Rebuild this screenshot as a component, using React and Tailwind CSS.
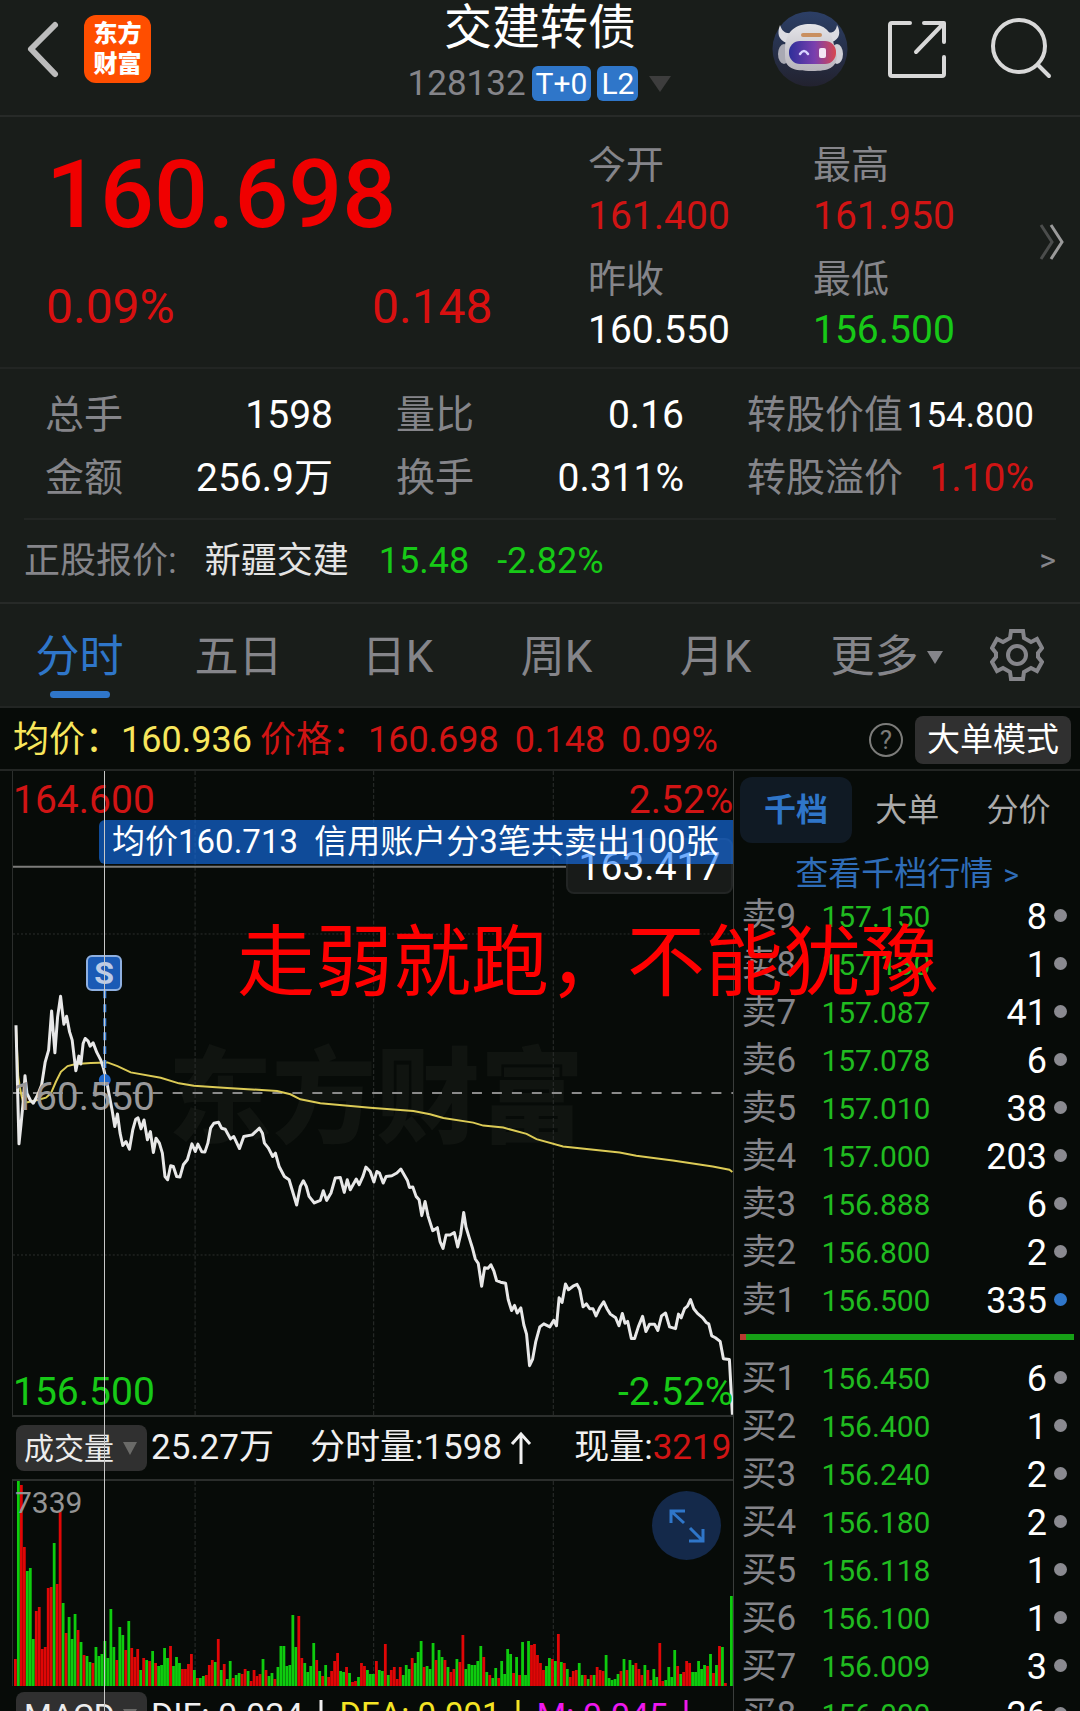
import React from "react";

const sells = [
  ["卖9", "157.150", "8"],
  ["卖8", "157.130", "1"],
  ["卖7", "157.087", "41"],
  ["卖6", "157.078", "6"],
  ["卖5", "157.010", "38"],
  ["卖4", "157.000", "203"],
  ["卖3", "156.888", "6"],
  ["卖2", "156.800", "2"],
  ["卖1", "156.500", "335", true],
];
const buys = [
  ["买1", "156.450", "6"],
  ["买2", "156.400", "1"],
  ["买3", "156.240", "2"],
  ["买4", "156.180", "2"],
  ["买5", "156.118", "1"],
  ["买6", "156.100", "1"],
  ["买7", "156.009", "3"],
  ["买8", "156.000", "26"],
];

// Minute trace, in thirds of a chart unit.
const priceOpen =
  "45,795 50,1000 54,1152 60,1095 68,1010 72,947 78,1000 88,1020 97,1030 110,1005 122,975 133,905 143,870 152,752 162,878 170,770 179,708 184,750 189,792 197,768 206,815 214,840 220,890 225,932 234,888 240,912 247,850 253,835 262,843 268,858 277,848 288,877 300,900 308,925 318,965 326,1010 334,1050 342,1100 350,1062 358,1120 366,1157 376,1145 386,1168 396,1110 405,1078 412,1074 421,1107 430,1080 440,1140 449,1115 458,1178 466,1135 476,1150 485,1180 493,1250 501,1260 510,1218 518,1220 528,1250 538,1252 548,1215 560,1200 574,1152 584,1175 592,1153 604,1176 613,1177 622,1150 630,1105 640,1090 654,1087 663,1105 674,1108 690,1137 700,1130 717,1166 730,1130 755,1125 777,1105 786,1120 792,1150 804,1165 817,1190 825,1180 836,1220 852,1250 866,1260 878,1300 889,1336 900,1280 909,1263 918,1280 926,1310 942,1330 960,1322 969,1293 979,1322 992,1300 1005,1255 1020,1253 1032,1298 1041,1260 1050,1290 1068,1258 1077,1275 1088,1250 1097,1222 1110,1235 1121,1267 1130,1235 1138,1240 1149,1270 1158,1250 1175,1248 1190,1240 1202,1228 1215,1250 1222,1262 1228,1283 1238,1282 1248,1310 1257,1320 1265,1368";
const priceClose =
  "185,208 195,170 204,210 218,250 232,242 240,280 249,299 258,262 270,262 283,255 293,295 302,260 311,200 318,240 328,270 338,300 346,328 355,340 365,403 374,352 384,354 393,344 402,362 410,388 422,392 437,395 445,440 455,470 464,456 472,477 483,463 492,510 500,535 509,622 518,605 528,555 540,515 552,507 570,515 582,497 590,512 598,435 607,448 617,397 626,413 640,403 652,398 660,412 670,460 680,452 690,465 700,465 709,485 720,463 732,446 742,465 752,480 768,490 778,512 788,478 796,505 804,500 815,547 825,547 836,515 849,486 859,528 870,508 885,508 895,525 906,485 918,477 930,515 948,520 957,480 965,490 975,465 984,458 993,440 1003,465 1014,478 1030,490 1040,503 1048,507 1057,540 1068,545 1082,555 1092,603 1110,605 1114,670 1119,757";
const average =
  "45,800 52,950 60,1000 66,1025 80,1027 110,1020 135,1013 150,1000 165,965 180,935 200,918 225,912 270,909 320,907 350,918 390,937 480,953 535,970 580,977 680,984 830,993 870,1003 900,1018 960,1030 1110,1043 1240,1053 1290,1063 1330,1074 1420,1088 1450,1097 1510,1103 1580,1122 1610,1138 1690,1160 1860,1178 1910,1188 2020,1202 2140,1220 2190,1230 2199,1237";

const place = (text, dx, dy, kx, ky) =>
  text.split(" ").map((p) => {
    const [x, y] = p.split(",").map(Number);
    return `${(x * kx + dx).toFixed(1)},${(y * ky + dy).toFixed(1)}`;
  });
const pricePoints = [
  ...place(priceOpen, -12, -10, 1 / 3, 1 / 3),
  ...place(priceClose, 348, 370, 1 / 3, 0.3642),
].join(" ");
const averagePoints = place(average, -12, -10, 1 / 3, 1 / 3).join(" ");

// One entry a minute: direction and height.
const volume =
  "r27 g205 r201 r139 g115 g118 g47 r75 r79 r37 r39 r98 r99 g143 r102 r174 g83 r53 g69 g47 g72 r56 g44 r31 g30 g24 r23 g39 g30 g32 g45 g28 g77 g39 r26 g59 g51 r36 g65 r38 r29 r37 g16 r28 g26 r25 g35 r23 g20 g21 g38 g28 r40 g20 g29 g23 r17 r17 r22 r32 g16 r8 g8 g10 r11 r21 r26 g24 r47 g16 r22 g7 g25 r8 g11 g13 r12 r17 g15 r5 r16 r10 r12 g27 r16 g10 g13 r7 g19 g40 g40 g20 g21 g71 g39 r70 r28 g23 g14 g20 g43 r26 g15 r10 g21 r9 r15 r25 r33 g15 g14 r19 g13 r4 r5 g9 r23 r20 g16 g12 g12 r25 g16 g15 r42 g11 r16 r19 r7 r19 g11 g21 g17 r28 g23 g34 g45 r19 g20 g17 g43 r26 g36 g29 r26 g19 r14 r17 g27 r24 r51 g17 g22 g21 g21 g25 g40 r29 g14 r11 g8 g18 r8 g25 g12 g37 g32 r13 g29 r11 g44 g11 g45 r41 r42 r31 r23 r16 g20 g28 r27 g25 r52 g24 r23 g17 r9 r15 r16 g23 g11 r11 g7 r11 g11 r19 r16 r15 g31 g8 g6 g7 g12 r15 g27 r16 g26 g21 r23 r17 r11 g21 r16 r6 g17 g9 r43 r5 g6 g19 g9 g36 r20 g12 r14 r25 r23 g14 g14 g25 g17 g21 r20 g32 r13 g21 r40 g39 r3 g0 g90".split(
    " "
  );

function Header() {
  return (
    <header className="grid h-[117px] grid-cols-[1fr_auto_1fr] border-b-2 border-[#272a28]">
      <div className="flex items-start gap-6 pl-[26px] pt-[15px]">
        <button aria-label="返回" className="h-[68px]">
          <svg width="34" height="60" viewBox="0 0 34 60" fill="none" stroke="#bcbcbc" strokeWidth="6" strokeLinecap="round" strokeLinejoin="round">
            <path d="M29 6 L5 30 L29 55" />
          </svg>
        </button>
        <button className="flex h-[68px] w-[67px] flex-col items-center justify-center rounded-xl bg-[#ff4e00] text-2xl font-black leading-[30px] text-white">
          <span>东方</span>
          <span>财富</span>
        </button>
      </div>
      <div className="flex flex-col items-center">
        <h1 className="text-5xl leading-[56px] text-white">交建转债</h1>
        <div className="mt-2.5 flex h-[35px] items-center gap-1.5">
          <span className="text-[35px] leading-9 text-[#85858a]">128132</span>
          <span className="flex h-[35px] items-center rounded-md bg-[#2f76c9] px-1 text-[30px] leading-9 text-white">T+0</span>
          <span className="flex h-[35px] items-center rounded-md bg-[#2f76c9] px-1 text-[30px] leading-9 text-white">L2</span>
          <svg className="ml-1" width="24" height="16" viewBox="0 0 24 16" fill="#3d3d3d">
            <path d="M1 0H23L12 16Z" />
          </svg>
        </div>
      </div>
      <div className="flex items-start justify-end pr-[25px] pt-[11px]">
        <button aria-label="智能助手" className="mr-[38px]">
          <svg width="76" height="76" viewBox="0 0 76 76">
            <defs>
              <linearGradient id="sky" x1="0" y1="0" x2="0" y2="1">
                <stop offset="0" stopColor="#2c3f66" />
                <stop offset="1" stopColor="#22222f" />
              </linearGradient>
              <linearGradient id="visor" x1="0" y1="0" x2="1" y2="0">
                <stop offset="0" stopColor="#2e2f9a" />
                <stop offset="0.55" stopColor="#7a3fae" />
                <stop offset="1" stopColor="#d8474f" />
              </linearGradient>
              <linearGradient id="shell" x1="0" y1="0" x2="0" y2="1">
                <stop offset="0" stopColor="#e4e4e8" />
                <stop offset="1" stopColor="#b6b3bb" />
              </linearGradient>
            </defs>
            <circle cx="38" cy="38" r="37.5" fill="url(#sky)" />
            <path d="M8 14 C5 22 6 29 15 32 L20 22 C13 23 10 20 8 14Z M65 14 C69 21 68 28 60 31 L54 21 C61 23 64 20 65 14Z" fill="#dcdce2" />
            <ellipse cx="12" cy="43" rx="6" ry="10" fill="#a9a9b3" />
            <ellipse cx="65" cy="43" rx="6" ry="10" fill="#cfcfd6" />
            <path d="M13 36 C14 20 24 13 38 13 C53 13 60 21 62 34 L65 45 C64 57 57 60 40 60 C21 60 13 57 13 45Z" fill="url(#shell)" />
            <rect x="29" y="22" width="21" height="4" rx="2" fill="#c98f60" />
            <rect x="17" y="30" width="47" height="23" rx="11" fill="url(#visor)" />
            <path d="M28 43 q4 -6 8 0" fill="none" stroke="#d9d4ff" strokeWidth="2.5" strokeLinecap="round" />
            <rect x="47" y="37" width="7" height="10" rx="2" fill="#f3e5f5" />
          </svg>
        </button>
        <button aria-label="分享" className="mr-[43px] mt-2">
          <svg width="62" height="62" viewBox="0 0 62 62" fill="none" stroke="#d8d8d8" strokeWidth="4" strokeLinecap="round" strokeLinejoin="round">
            <path d="M24 4H6Q4 4 4 6V55Q4 57 6 57H56Q58 57 58 55V38M38 4H58V23M57 5L30 33" />
          </svg>
        </button>
        <button aria-label="搜索" className="mt-1.5">
          <svg width="64" height="64" viewBox="0 0 64 64" fill="none" stroke="#d8d8d8" strokeWidth="4" strokeLinecap="round">
            <circle cx="28" cy="29" r="26" />
            <path d="M47 48L58 59" />
          </svg>
        </button>
      </div>
    </header>
  );
}

function Quote({ label, value, tone }) {
  return (
    <div>
      <dt className="text-[38px] leading-[56px] text-[#85858a]">{label}</dt>
      <dd className={"text-[39px] leading-[46px] " + tone}>{value}</dd>
    </div>
  );
}

function Summary() {
  return (
    <section className="flex h-[252px] border-b-2 border-[#222523]">
      <div className="w-[540px] pl-[46px]">
        <div className="pt-[26px] text-[95px] font-medium leading-[104px] text-[#f00000]">160.698</div>
        <div className="flex pt-[30px] text-[48px] leading-[60px] text-[#d81010]">
          <span className="w-[326px]">0.09%</span>
          <span>0.148</span>
        </div>
      </div>
      <dl className="grid flex-1 grid-cols-2 content-start gap-x-0 gap-y-3 pl-12 pt-5">
        <Quote label="今开" value="161.400" tone="text-[#d01414]" />
        <Quote label="最高" value="161.950" tone="text-[#d01414]" />
        <Quote label="昨收" value="160.550" tone="text-white" />
        <Quote label="最低" value="156.500" tone="text-[#17c917]" />
      </dl>
      <button aria-label="展开" className="pr-4">
        <svg width="26" height="40" viewBox="0 0 26 40" fill="none" strokeWidth="3">
          <path d="M3 3L14 20L3 37" stroke="#4b4d4c" />
          <path d="M13 3L24 20L13 37" stroke="#9a9a9a" />
        </svg>
      </button>
    </section>
  );
}

function Stat({ label, value, tone }) {
  return (
    <div className="flex items-center justify-between whitespace-nowrap">
      <dt className="text-[#85858a]">{label}</dt>
      <dd className={tone}>{value}</dd>
    </div>
  );
}

function Stats() {
  return (
    <dl className="mx-6 grid h-[151px] grid-cols-[288px_288px_287px] content-start justify-between border-b-2 border-[#222523] pl-[21px] pr-[22px] pt-[15px] text-[39px] leading-[63px]">
      <Stat label="总手" value="1598" tone="text-white" />
      <Stat label="量比" value="0.16" tone="text-white" />
      <Stat label="转股价值" value="154.800" tone="text-[35px] text-white" />
      <Stat label="金额" value="256.9万" tone="text-white" />
      <Stat label="换手" value="0.311%" tone="text-white" />
      <Stat label="转股溢价" value="1.10%" tone="text-[#d01414]" />
    </dl>
  );
}

function Underlying() {
  return (
    <a href="#stock" className="flex h-[84px] items-center border-b-2 border-[#272a28] px-6 text-4xl text-[#85858a]">
      <span>正股报价:</span>
      <span className="ml-7 text-[#e4e4e4]">新疆交建</span>
      <span className="ml-[30px] text-[#17c917]">15.48</span>
      <span className="ml-7 text-[#17c917]">-2.82%</span>
      <span className="ml-auto text-[32px]">&gt;</span>
    </a>
  );
}

function Periods() {
  const tab = "flex h-full items-center justify-center pt-1";
  return (
    <nav className="grid h-[104px] grid-cols-[repeat(6,159fr)_126fr] items-center border-b-2 border-[#222523] text-[44px] text-[#85858a]">
      <button className={tab + " relative text-[#2f76c9]"}>
        分时
        <span className="absolute bottom-2 left-1/2 h-[7px] w-[60px] -translate-x-1/2 rounded-full bg-[#2f76c9]" />
      </button>
      <button className={tab}>五日</button>
      <button className={tab}>日K</button>
      <button className={tab}>周K</button>
      <button className={tab}>月K</button>
      <button className={tab + " gap-2 pl-6"}>
        更多
        <svg width="16" height="13" viewBox="0 0 16 13" fill="#85858a"><path d="M0 0H16L8 13Z" /></svg>
      </button>
      <button aria-label="设置" className="flex justify-center">
        <svg width="54" height="54" viewBox="0 0 54 54" fill="none" stroke="#85858a" strokeWidth="4" strokeLinejoin="miter">
          <path d="M21 3H33L34 10L41 14L47 11L52 20L48 25V29L52 34L47 43L41 40L34 44L33 51H21L20 44L13 40L7 43L2 34L6 29V25L2 20L7 11L13 14L20 10Z" />
          <circle cx="27" cy="27" r="9" />
        </svg>
      </button>
    </nav>
  );
}

function PriceBar() {
  return (
    <div className="flex h-[61px] items-center whitespace-nowrap bg-[#070b08] pl-[13px] pr-[9px] pt-0.5 text-4xl">
      <span className="text-[#f8e65c]">均价：</span>
      <span className="text-[#f8e65c]">160.936</span>
      <span className="ml-2 text-[#d01414]">价格：</span>
      <span className="text-[#d01414]">160.698</span>
      <span className="ml-4 text-[#d01414]">0.148</span>
      <span className="ml-4 text-[#d01414]">0.09%</span>
      <button aria-label="说明" className="ml-auto flex h-[34px] w-[34px] items-center justify-center rounded-full border-2 border-[#7c7c7a] text-[26px] leading-none text-[#7c7c7a]">
        ?
      </button>
      <button className="ml-3 h-12 rounded-lg bg-[#303030] px-3 text-[33px] leading-[48px] text-white">大单模式</button>
    </div>
  );
}

function PriceChart() {
  return (
    <div className="relative ml-3 h-[646px] border-b-2 border-l border-[#2b2e2c] text-[39px] leading-[46px]">
      <div className="absolute left-[155px] top-[259px] whitespace-nowrap text-[104px] font-black leading-[140px] text-[#101410]">东方财富</div>
      <svg className="absolute inset-0 h-full w-full" viewBox="0 0 722 646" preserveAspectRatio="none" fill="none">
        <g stroke="#2c2f2d" strokeWidth="1">
          <path d="M182.5 0V646M361.5 0V646M541.5 0V646" strokeDasharray="4 2" />
          <path d="M0 163.5H722M0 485.5H722" strokeDasharray="2 2" />
        </g>
        <path d="M0 323H722" stroke="#8a8a8a" strokeWidth="2" strokeDasharray="10 10" />
        <path d="M0 96H722" stroke="#7c7c7a" strokeWidth="2" />
        <polyline points={averagePoints} stroke="#dccb56" strokeWidth="2" />
        <polyline points={pricePoints} stroke="#e8e8e8" strokeWidth="3" strokeLinejoin="round" />
        <path d="M92 220V304" stroke="#3f86e0" strokeWidth="3" strokeDasharray="8 6" />
        <circle cx="92" cy="310" r="6" fill="#1f68cc" />
      </svg>
      <span className="absolute left-0 top-1.5 text-[#d01414]">164.600</span>
      <span className="absolute right-0 top-1.5 text-[#d01414]">2.52%</span>
      <span className="absolute left-0 top-[303px] text-[#98989a]">160.550</span>
      <span className="absolute bottom-0 left-0 text-[#17c917]">156.500</span>
      <span className="absolute bottom-0 right-0 text-[#17c917]">-2.52%</span>
      <span className="absolute right-0 top-[67px] h-14 rounded-lg border-2 border-[#222524] bg-[#181b19] px-[11px] pt-1 text-white">163.417</span>
      <div className="absolute left-[86px] right-0 top-[49px] flex h-11 items-center whitespace-pre rounded-l-md bg-[#1676fa]/60 pl-[13px] text-[33px] text-white">
        均价160.713  信用账户分3笔共卖出100张
      </div>
      <span className="absolute left-[73px] top-[184px] flex h-9 w-9 items-center justify-center rounded-md border-2 border-[#8fb0e0] bg-[#1a5ab5] text-[32px] font-bold leading-none text-[#bccbe6]">
        S
      </span>
    </div>
  );
}

function Picker({ label, name, size }) {
  return (
    <span className="relative flex items-center">
      <select aria-label={label} defaultValue={name} className={"h-[46px] w-[131px] appearance-none rounded-lg bg-[#303030] pl-2 text-[#ececec] " + size}>
        <option>{name}</option>
      </select>
      <svg className="pointer-events-none absolute right-2.5" width="14" height="13" viewBox="0 0 14 13" fill="#6a6a68"><path d="M0 0H14L7 13Z" /></svg>
    </span>
  );
}

function VolumeChart() {
  return (
    <>
      <div className="flex h-[62px] items-center whitespace-nowrap pl-4 pr-0.5 text-[35px] text-[#f0f0f0]">
        <Picker label="指标" name="成交量" size="text-[30px]" />
        <span className="ml-1">25.27万</span>
        <span className="ml-9 flex items-center">
          分时量:1598
          <svg className="ml-2" width="22" height="34" viewBox="0 0 22 34" fill="none" stroke="#f0f0f0" strokeWidth="3"><path d="M11 33V3M2 13L11 3L20 13" /></svg>
        </span>
        <span className="ml-auto">现量:<span className="text-[#d01414]">3219</span></span>
      </div>
      <div className="relative ml-3 h-[207px] border-l border-t-2 border-[#2b2e2c]">
        <svg className="absolute inset-0 h-full w-full" viewBox="0 0 722 205" preserveAspectRatio="none">
          <path d="M182.5 0V205M361.5 0V205M541.5 0V205" stroke="#2c2f2d" strokeDasharray="4 2" />
          {volume.map((v, i) => (
            <rect key={i} x={1 + i * 2.99} y={205 - Number(v.slice(1))} width="2.8" height={Number(v.slice(1))} fill={v[0] === "g" ? "#0ecc0e" : "#e00606"} />
          ))}
        </svg>
        <span className="absolute left-0.5 top-1 text-[30px] leading-9 text-[#949494]">7339</span>
        <button aria-label="放大" className="absolute right-3 top-2.5 flex h-[69px] w-[69px] items-center justify-center rounded-full bg-[#14294a]">
          <svg width="36" height="36" viewBox="0 0 36 36" fill="none" stroke="#2f76c9" strokeWidth="3">
            <path d="M2 15V3H16M3 4L15 15M34 21V33H20M33 32L21 20" />
          </svg>
        </button>
      </div>
      <div className="flex items-start whitespace-nowrap pl-4 pt-1.5 text-[34px] leading-[46px]">
        <Picker label="副图指标" name="MACD" size="text-[32px]" />
        <span className="ml-1 text-[#f0f0f0]">DIF: 0.024</span>
        <DownArrow color="#f0f0f0" />
        <span className="text-[33px] text-[#f4e425]">DEA: 0.001</span>
        <DownArrow color="#f4e425" />
        <span className="text-[#ee18ee]">M: 0.045</span>
        <DownArrow color="#ee18ee" />
      </div>
    </>
  );
}

function DownArrow({ color }) {
  return (
    <svg className="mx-2 mt-2" width="20" height="32" viewBox="0 0 20 32" fill="none" stroke={color} strokeWidth="3">
      <path d="M10 0V30M2 21L10 30L18 21" />
    </svg>
  );
}

function Levels({ caption, rows }) {
  return (
    <table className="w-full">
      <caption className="sr-only">{caption}</caption>
      <tbody>
        {rows.map(([name, price, count, active]) => (
          <tr key={name} className="h-12 leading-[48px]">
            <th scope="row" className="w-20 p-0 text-left text-[35px] font-normal text-[#85858a]">{name}</th>
            <td className="p-0 text-[30px] text-[#20bc20]">{price}</td>
            <td className="p-0 text-right text-4xl leading-[48px] text-white">{count}</td>
            <td className="w-[27px] p-0 pl-[7px]">
              <span className={"mb-1 block h-[13px] w-[13px] rounded-full " + (active ? "bg-[#2f76c9]" : "bg-[#8a8a90]")} />
            </td>
          </tr>
        ))}
      </tbody>
    </table>
  );
}

function OrderBook() {
  return (
    <aside className="pl-1.5 pr-1.5 pt-1.5">
      <div className="flex h-[66px] text-[32px] text-[#aaaaaa]">
        <button className="flex-1 rounded-xl bg-[#101a24] font-bold text-[#2f76c9]">千档</button>
        <button className="flex-1">大单</button>
        <button className="flex-1">分价</button>
      </div>
      <a href="#depth" className="flex h-[50px] items-center justify-center gap-2.5 pt-3 text-[33px] text-[#2f6db8]">
        查看千档行情 <span className="text-[30px]">&gt;</span>
      </a>
      <div className="pl-px">
        <Levels caption="卖盘" rows={sells} />
      </div>
      <div className="my-[9px] flex h-1.5 bg-[#16a016]">
        <span className="w-1.5 bg-[#b83a30]" />
      </div>
      <div className="pl-px pt-1.5">
        <Levels caption="买盘" rows={buys} />
      </div>
    </aside>
  );
}

export default function App() {
  return (
    <div className="h-screen w-full overflow-hidden bg-[#191d1a] font-['Roboto','Noto_Sans_CJK_SC',sans-serif]">
      <Header />
      <Summary />
      <Stats />
      <Underlying />
      <Periods />
      <PriceBar />
      <main className="relative grid grid-cols-[68fr_32fr] border-t-2 border-[#232624] bg-[#070b08]">
        <section className="relative min-w-0 border-r border-[#3a3d3b]">
          <PriceChart />
          <VolumeChart />
          <span className="pointer-events-none absolute inset-y-0 left-[104px] w-px bg-[#c8c8c8]" />
        </section>
        <OrderBook />
        <p className="pointer-events-none absolute left-[237px] top-[135px] whitespace-nowrap text-[78px] leading-[116px] text-[#ff0000]">
          走弱就跑，不能犹豫
        </p>
      </main>
    </div>
  );
}
